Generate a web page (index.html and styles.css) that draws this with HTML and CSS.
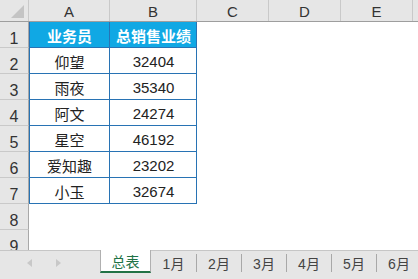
FILE: index.html
```
<!DOCTYPE html>
<html lang="zh-CN">
<head>
    <meta charset="UTF-8">
    <title>总表</title>
    <link rel="stylesheet" href="styles.css">
</head>
<body>
    <div class="sheet">
        <div class="row head">
            <div class="rh corner"><span class="tri"></span></div>
            <div class="ch colA">A</div>
            <div class="ch colB">B</div>
            <div class="ch colC">C</div>
            <div class="ch colC">D</div>
            <div class="ch colC">E</div>
            <div class="ch colF"></div>
        </div>
        <div class="row">
            <div class="rh">1</div>
            <div class="cell colA t title first">业务员</div>
            <div class="cell colB t title">总销售业绩</div>
        </div>
        <div class="row">
            <div class="rh">2</div>
            <div class="cell colA t first">仰望</div>
            <div class="cell colB t">32404</div>
        </div>
        <div class="row">
            <div class="rh">3</div>
            <div class="cell colA t first">雨夜</div>
            <div class="cell colB t">35340</div>
        </div>
        <div class="row">
            <div class="rh">4</div>
            <div class="cell colA t first">阿文</div>
            <div class="cell colB t">24274</div>
        </div>
        <div class="row">
            <div class="rh">5</div>
            <div class="cell colA t first">星空</div>
            <div class="cell colB t">46192</div>
        </div>
        <div class="row">
            <div class="rh">6</div>
            <div class="cell colA t first">爱知趣</div>
            <div class="cell colB t">23202</div>
        </div>
        <div class="row">
            <div class="rh">7</div>
            <div class="cell colA t first">小玉</div>
            <div class="cell colB t">32674</div>
        </div>
        <div class="row">
            <div class="rh">8</div>
        </div>
        <div class="row">
            <div class="rh">9</div>
        </div>
    </div>

    <div class="tabbar">
        <div class="nav">
            <span class="arrow left"></span>
            <span class="arrow right"></span>
        </div>
        <div class="tab active">总表</div>
        <div class="tab">1月</div>
        <div class="tab">2月</div>
        <div class="tab">3月</div>
        <div class="tab">4月</div>
        <div class="tab">5月</div>
        <div class="tab">6月</div>
    </div>
</body>
</html>
```

FILE: styles.css
```
body {
    margin: 0;
    width: 418px;
    height: 279px;
    overflow: hidden;
    background-color: white;
    font-family: "Liberation Sans", "Noto Sans CJK SC", sans-serif;
    color: #222;
}

.sheet {
    height: 250px;
    overflow: hidden;
}

.row {
    display: flex;
    height: 26px;
}

.row.head {
    height: 22px;
    background-color: #e6e6e6;
    border-bottom: 1px solid #9e9e9e;
    box-sizing: border-box;
}

.rh {
    width: 29px;
    height: 26px;
    flex: none;
    box-sizing: border-box;
    background-color: #e6e6e6;
    border-right: 1px solid #a8a8a8;
    border-bottom: 1px solid #c9c9c9;
    text-align: center;
    line-height: 26px;
    padding-top: 4px;
    font-size: 16px;
    color: #333;
}

.rh.corner {
    position: relative;
    height: 21px;
    padding-top: 0;
    border-bottom: none;
    border-right: 1px solid #c9c9c9;
}

.tri {
    position: absolute;
    right: 4px;
    bottom: 3px;
    width: 0;
    height: 0;
    border-left: 13px solid transparent;
    border-bottom: 13px solid #c4c4c4;
}

.ch {
    flex: none;
    box-sizing: border-box;
    border-right: 1px solid #c9c9c9;
    display: flex;
    align-items: center;
    justify-content: center;
    padding-top: 2px;
    font-size: 15px;
    color: #333;
}

.colA { width: 81px; }
.colB { width: 87px; }
.colC { width: 72px; }
.colF { width: 5px; border-right: none; }

.cell {
    flex: none;
    box-sizing: border-box;
    display: flex;
    align-items: center;
    justify-content: center;
    font-size: 15px;
    color: #222;
}

.t {
    box-shadow: inset -1px -1px 0 #2873b4;
}

.t.first {
    box-shadow: inset -1px -1px 0 #2873b4, inset 1px 0 0 #2873b4;
}

.title {
    background-color: #10a8e4;
    color: white;
    font-weight: bold;
    font-size: 15px;
}

.tabbar {
    height: 29px;
    box-sizing: border-box;
    background-color: #e6e6e6;
    border-top: 1px solid #c6c6c6;
    display: flex;
    font-size: 14px;
}

.nav {
    width: 100px;
    flex: none;
    display: flex;
    align-items: center;
    padding-left: 27px;
    gap: 24px;
    box-sizing: border-box;
    margin-top: -4px;
}

.arrow {
    width: 0;
    height: 0;
    border-top: 4px solid transparent;
    border-bottom: 4px solid transparent;
}

.arrow.left { border-right: 5px solid #c8c8c8; }
.arrow.right { border-left: 5px solid #c8c8c8; }

.tab {
    width: 45px;
    flex: none;
    height: 18px;
    margin-top: 3px;
    box-sizing: border-box;
    border-left: 1px solid #a8a8a8;
    display: flex;
    align-items: center;
    justify-content: center;
    color: #444;
}

.tab.active {
    width: 51px;
    height: 23px;
    margin-top: -1px;
    background-color: white;
    color: #217346;
    border-left: 1px solid #b0b0b0;
    border-right: 1px solid #b0b0b0;
    border-bottom: 2px solid #217346;
    padding-top: 1px;
}

.tab.active + .tab {
    border-left: none;
}
```
